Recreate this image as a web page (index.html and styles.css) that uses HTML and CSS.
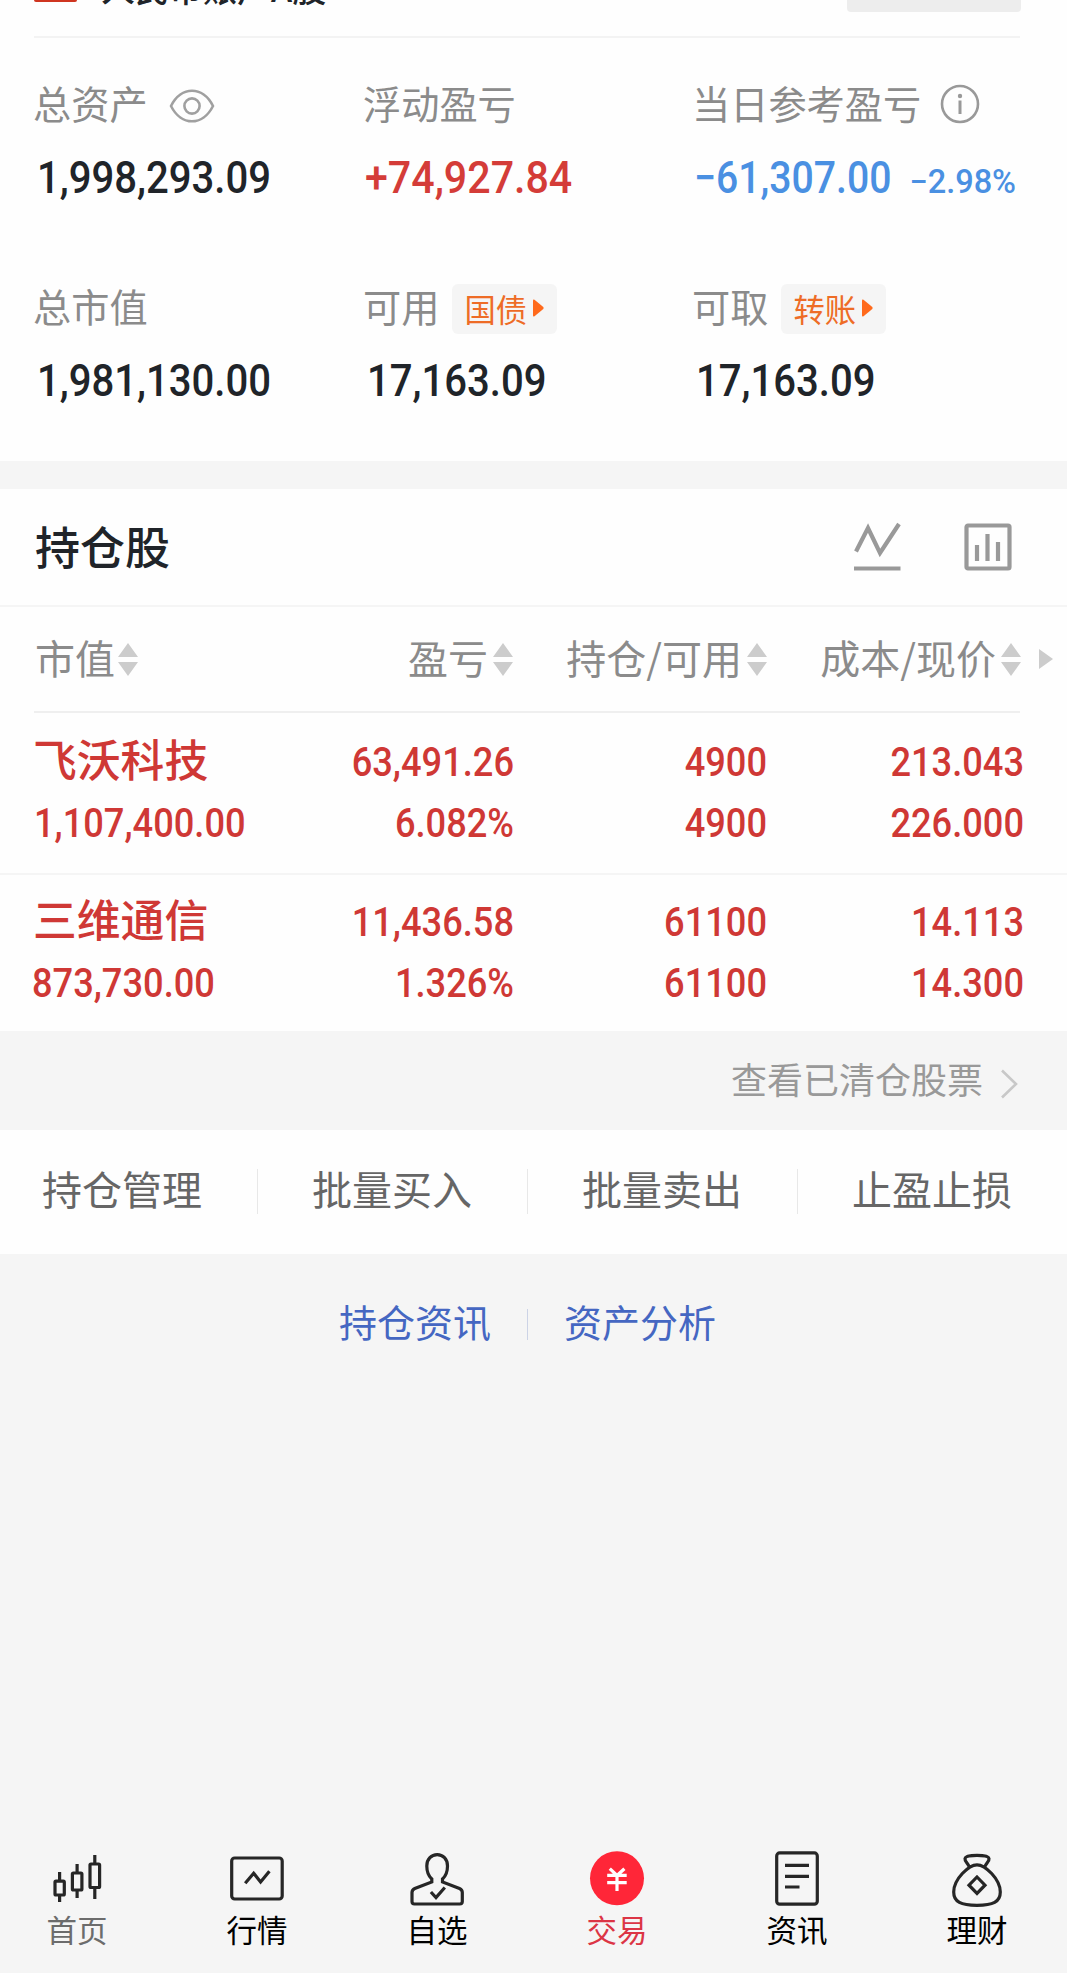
FILE: index.html
```html
<!DOCTYPE html>
<html lang="zh-CN">
<head>
<meta charset="utf-8">
<title>交易</title>
<link rel="stylesheet" href="styles.css">
</head>
<body>
<div class="page">
  <section class="summary">
    <div class="account">
      <span class="account-flag"></span>
      <span class="account-name">人民币账户A股</span>
      <span class="account-button"></span>
    </div>
    <div class="assets">
      <div class="asset">
        <div class="label">总资产
          <svg class="eye" width="46" height="34" viewBox="0 0 46 34"><path d="M2 17C7 7 15 1.700 23 1.700S39 7 44 17C39 27 31 32.300 23 32.300S7 27 2 17Z"/><circle cx="23" cy="17" r="7.600"/></svg>
        </div>
        <div class="value"><span class="num">1,998,293.09</span></div>
      </div>
      <div class="asset">
        <div class="label">浮动盈亏</div>
        <div class="value up"><span class="num">+74,927.84</span></div>
      </div>
      <div class="asset">
        <div class="label">当日参考盈亏
          <svg class="info" width="40" height="40" viewBox="0 0 40 40"><circle cx="20" cy="20" r="18"/><path d="M20 16.500V30"/><circle class="dot" cx="20" cy="12" r="2.200"/></svg>
        </div>
        <div class="value down"><span class="num">−61,307.00</span><span class="num rate">−2.98%</span></div>
      </div>
      <div class="asset">
        <div class="label">总市值</div>
        <div class="value"><span class="num">1,981,130.00</span></div>
      </div>
      <div class="asset">
        <div class="label">可用<span class="tag">国债<svg width="11" height="18" viewBox="0 0 11 18"><path d="M0 1.500Q0 0 1.500 .8L10.300 8Q11 9 10.300 10L1.500 17.200Q0 18 0 16.500Z"/></svg></span></div>
        <div class="value"><span class="num">17,163.09</span></div>
      </div>
      <div class="asset">
        <div class="label">可取<span class="tag">转账<svg width="11" height="18" viewBox="0 0 11 18"><path d="M0 1.500Q0 0 1.500 .8L10.300 8Q11 9 10.300 10L1.500 17.200Q0 18 0 16.500Z"/></svg></span></div>
        <div class="value"><span class="num">17,163.09</span></div>
      </div>
    </div>
  </section>

  <section class="holdings">
    <div class="title-bar">
      <h2>持仓股</h2>
      <svg class="tool" width="48" height="50" viewBox="0 0 48 50"><path d="M3 29.500L15 6L27 31L46 2M1 46.500H47.500"/></svg>
      <svg class="tool" width="48" height="50" viewBox="0 0 48 50"><rect x="2.500" y="3.500" width="43" height="43" rx="1.500"/><path d="M13 23V39M23.500 12V39M34 20V39"/></svg>
    </div>
    <div class="columns head">
      <div><span>市值</span><svg class="sort" width="20" height="33" viewBox="0 0 20 33"><path d="M10 0L20 14H0ZM0 19H20L10 33Z"/></svg></div>
      <div><span>盈亏</span><svg class="sort" width="20" height="33" viewBox="0 0 20 33"><path d="M10 0L20 14H0ZM0 19H20L10 33Z"/></svg></div>
      <div><span>持仓/可用</span><svg class="sort" width="20" height="33" viewBox="0 0 20 33"><path d="M10 0L20 14H0ZM0 19H20L10 33Z"/></svg></div>
      <div><span>成本/现价</span><svg class="sort" width="20" height="33" viewBox="0 0 20 33"><path d="M10 0L20 14H0ZM0 19H20L10 33Z"/></svg></div>
      <svg class="more" width="14" height="20" viewBox="0 0 14 20"><path d="M0 0L14 10L0 20Z"/></svg>
    </div>
    <div class="head-rule"></div>
    <div class="columns stock">
      <div><b>飞沃科技</b><span class="num">1,107,400.00</span></div>
      <div><span class="num">63,491.26</span><span class="num">6.082%</span></div>
      <div><span class="num">4900</span><span class="num">4900</span></div>
      <div><span class="num">213.043</span><span class="num">226.000</span></div>
    </div>
    <div class="columns stock last">
      <div><b>三维通信</b><span class="num">873,730.00</span></div>
      <div><span class="num">11,436.58</span><span class="num">1.326%</span></div>
      <div><span class="num">61100</span><span class="num">61100</span></div>
      <div><span class="num">14.113</span><span class="num">14.300</span></div>
    </div>
  </section>

  <div class="cleared"><span>查看已清仓股票</span><svg width="18" height="30" viewBox="0 0 18 30"><path d="M2 1.500L16 15L2 28.500"/></svg></div>

  <div class="actions">
    <div>持仓管理</div><div>批量买入</div><div>批量卖出</div><div>止盈止损</div>
  </div>

  <div class="links"><span>持仓资讯</span><i></i><span>资产分析</span></div>

  <nav class="tabs">
    <div class="tab muted">
      <svg width="60" height="60" viewBox="0 0 60 60"><path d="M12.600 24V33M12.600 47V54M30.100 16V25M30.100 42V50M47.800 7V16M47.800 40V51"/><rect x="8" y="33.200" width="9.300" height="13.800" rx="1"/><rect x="25.400" y="25" width="9.500" height="17" rx="1"/><rect x="43" y="16" width="9.600" height="23.500" rx="1"/></svg>
      <span>首页</span>
    </div>
    <div class="tab">
      <svg width="60" height="60" viewBox="0 0 60 60"><rect x="4.700" y="10" width="50.500" height="41" rx="3"/><path d="M18.200 35.300L26.700 25.300L33.600 34L42.400 23.300"/></svg>
      <span>行情</span>
    </div>
    <div class="tab">
      <svg width="60" height="60" viewBox="0 0 60 60"><path d="M24.800 34V31C21 27.500 19.800 23 19.800 18C19.800 11 24.500 6.700 30.200 6.700S40.500 11 40.500 18C40.500 23 39.300 27.500 35.500 31V34L52.500 40.500Q55.300 41.800 55.300 44.500V53.500Q55.300 56 52.800 56H7.500Q5 56 5 53.500V44.500Q5 41.800 7.800 40.500Z"/><path d="M23.900 44L29 49.500L37.800 39.500"/></svg>
      <span>自选</span>
    </div>
    <div class="tab active">
      <svg width="60" height="60" viewBox="0 0 60 60"><circle class="coin" cx="30" cy="30.300" r="27"/><path d="M22.800 20.700L30 27.500L37.400 20.700M20.200 27.300H39.700M20.200 34.700H39.700M30 27V43"/></svg>
      <span>交易</span>
    </div>
    <div class="tab">
      <svg width="60" height="60" viewBox="0 0 60 60"><rect x="9.700" y="4.900" width="40.600" height="51.300" rx="3"/><path d="M18 17.300H42M18 28.300H42M18 39H32.500"/></svg>
      <span>资讯</span>
    </div>
    <div class="tab">
      <svg width="60" height="60" viewBox="0 0 60 60"><path d="M30 16.800C38 16.800 53.300 31 53.300 44C53.300 54 46 57.300 30 57.300S6.700 54 6.700 44C6.700 31 22 16.800 30 16.800ZM22.500 19.500C21 15 17.500 13.500 18 10.500C18.500 8 25 7.400 30 7.400S41.500 8 42 10.500C42.500 13.500 39 15 37.500 19.500M30 29L38 37.200L30 45.400L22 37.200Z"/></svg>
      <span>理财</span>
    </div>
  </nav>
</div>
</body>
</html>
```

FILE: styles.css
```css
* { box-sizing: border-box; }

body {
  margin: 0;
  background: #f5f5f5;
  font-family: "Noto Sans CJK SC", sans-serif;
  color: #8b8b8b;
}

svg { display: block; flex: none; fill: none; }

.page {
  display: flex;
  flex-direction: column;
  width: 1067px;
  height: 1973px;
  overflow: hidden;
}

.num {
  display: block;
  font-family: Roboto, sans-serif;
  font-weight: 500;
  white-space: nowrap;
  transform: scaleX(.9);
  transform-origin: left center;
}

/* Account summary */
.summary { height: 461px; background: #fefefe; }

.account {
  display: flex;
  height: 38px;
  margin: 0 47px 0 34px;
  border-bottom: 2px solid #f3f3f3;
}
.account-flag { width: 43px; height: 2px; background: #cf3520; border-radius: 0 0 3px 3px; }
.account-name {
  margin: -37px 0 0 24px;
  font-size: 34px;
  line-height: 50px;
  height: 50px;
  font-weight: 500;
  color: #202429;
}
.account-button {
  width: 174px;
  height: 12px;
  margin: 0 -1px 0 auto;
  background: #ededed;
  border-radius: 0 0 4px 4px;
}

.assets {
  display: grid;
  grid-template-columns: 330px 329px 1fr;
  row-gap: 68px;
  padding: 35px 0 0 33px;
}
.label {
  display: flex;
  align-items: center;
  height: 60px;
  font-size: 38.2px;
  line-height: 60px;
  white-space: nowrap;
}
.eye { margin: 5px 0 0 21px; stroke: #a0a0a0; stroke-width: 2.6; }
.info { margin: 2px 0 0 19px; stroke: #999; stroke-width: 2.6; }
.info path { stroke-width: 3; }
.info .dot { fill: #999; stroke: none; }
.tag {
  display: flex;
  align-items: center;
  gap: 6px;
  width: 105px;
  height: 50px;
  margin: 5px 0 0 13px;
  padding-left: 12px;
  border-radius: 6px;
  background: #f5f5f5;
  color: #ee6c26;
  font-size: 31.3px;
  line-height: 46px;
}
.tag svg { margin-top: -1px; fill: #ff6a1c; }
.value {
  display: flex;
  height: 60px;
  margin: 15px 0 0 4px;
  font-size: 44.5px;
  line-height: 61px;
  color: #202429;
}
.value.up { margin-left: 2px; color: #d43c38; }
.value.up .num { transform: scaleX(.925); }
.value.down { margin-left: 2px; color: #4a90e2; }
.value.down .num { transform: scaleX(.88); }
.value.down .rate {
  margin-left: -9px;
  font-size: 32.5px;
  line-height: 69px;
  transform: scaleX(1);
}

/* Holdings */
.holdings { margin-top: 28px; background: #fefefe; }
.title-bar {
  display: flex;
  align-items: center;
  height: 118px;
  padding: 0 55px 0 35px;
  border-bottom: 2px solid #f5f5f5;
}
.title-bar h2 {
  margin: -3px auto 0 0;
  font-size: 45px;
  line-height: 60px;
  font-weight: 500;
  color: #202429;
}
.tool { stroke: #999; stroke-width: 4.2; }
.tool + .tool { margin-left: 63px; }

.columns {
  display: grid;
  grid-template-columns: 230px 250px 253px 257px;
  padding-left: 34px;
}
.head {
  grid-template-columns: 229px 250px 254px 254px 1fr;
  align-items: center;
  height: 104px;
  font-size: 40px;
  line-height: 60px;
}
.head div { display: flex; align-items: center; justify-content: flex-end; white-space: nowrap; }
.head div:first-child { justify-content: flex-start; padding-left: 1px; }
.head div:first-child .sort { margin-left: 3px; }
.head span { margin-top: -4px; }
.sort { margin-left: 5px; fill: #ccc; }
.more { margin-left: 18px; fill: #ccc; }
.head-rule { height: 2px; margin: 0 47px 0 34px; background: #efefef; }

.stock {
  height: 162px;
  padding-top: 18px;
  border-bottom: 2px solid #f5f5f5;
  color: #cf3835;
  font-size: 40.8px;
  line-height: 62px;
}
.stock.last { height: 156px; padding-top: 16px; border: 0; }
.stock .num { height: 61px; margin-left: 0; transform: scaleX(.888); }
.stock.last div:first-child .num { margin-left: -2px; }
.stock b {
  display: block;
  height: 61px;
  margin-left: -1px;
  font-size: 43.8px;
  line-height: 55px;
  font-weight: 500;
}
.stock div + div { text-align: right; }
.stock div + div .num { transform-origin: right center; }

.cleared {
  display: flex;
  align-items: center;
  justify-content: flex-end;
  height: 99px;
  padding-right: 49px;
  font-size: 36px;
  line-height: 60px;
  color: #999;
}
.cleared span { margin-top: -5px; }
.cleared svg { margin: 6px 0 0 17px; stroke: #c8c8c8; stroke-width: 2.6; }

.actions {
  display: flex;
  align-items: center;
  height: 124px;
  margin-left: -13px;
  background: #fefefe;
  font-size: 40px;
  line-height: 60px;
  color: #666;
}
.actions div { flex: 0 0 270px; text-align: center; margin-top: -8px; }
.actions div + div {
  background: linear-gradient(#e8e8e8, #e8e8e8) 0 11px / 1px 45px no-repeat;
}

.links {
  display: flex;
  align-items: center;
  justify-content: center;
  height: 138px;
  margin-right: 12px;
  font-size: 38px;
  line-height: 60px;
  color: #4567c2;
}
.links span { margin-top: -4px; }
.links i { width: 1px; height: 31px; margin: 3px 36px 0; background: #ccd3e6; }

/* Bottom navigation */
.tabs { display: flex; height: 125px; margin: auto 0 0 -13px; color: #000; }
.tab {
  display: flex;
  flex: 0 0 180px;
  flex-direction: column;
  align-items: center;
  font-size: 30.5px;
  line-height: 42px;
}
.tab svg { stroke: #262626; stroke-width: 3.2; }
.muted { color: #6c6c6c; }
.active { color: #dc3545; }
.active svg { stroke: #fff; stroke-width: 3.2; }
.active .coin { fill: #ff2638; stroke: none; }
```
